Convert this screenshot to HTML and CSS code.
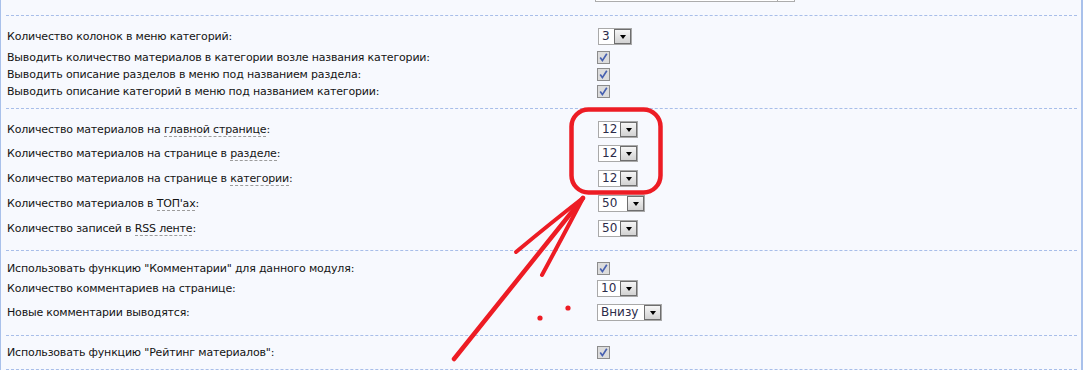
FILE: index.html
```html
<!DOCTYPE html>
<html lang="ru">
<head>
<meta charset="utf-8">
<title>Настройки модуля</title>
<link rel="stylesheet" href="styles.css">
</head>
<body>
<div class="panel">
  <div class="top"><div class="topsel"><span class="topsel-btn"></span></div></div>

  <section class="sec s1">
    <div class="row ra"><div class="lbl">Количество колонок в меню категорий:</div><div class="ctl"><div class="sel w34"><span class="val">3</span><span class="btn"></span></div></div></div>
    <div class="row rc"><div class="lbl">Выводить количество материалов в категории возле названия категории:</div><div class="ctl"><svg class="cb" width="13" height="13" viewBox="0 0 13 13"><rect x="0.5" y="0.5" width="12" height="12" fill="#dcdcdc" stroke="#8c8c8c"/><path d="M3.2 6.6 L5.4 9.6 L9.8 2.8" fill="none" stroke="#4760b0" stroke-width="1.7"/></svg></div></div>
    <div class="row rc"><div class="lbl">Выводить описание разделов в меню под названием раздела:</div><div class="ctl"><svg class="cb" width="13" height="13" viewBox="0 0 13 13"><rect x="0.5" y="0.5" width="12" height="12" fill="#dcdcdc" stroke="#8c8c8c"/><path d="M3.2 6.6 L5.4 9.6 L9.8 2.8" fill="none" stroke="#4760b0" stroke-width="1.7"/></svg></div></div>
    <div class="row rc"><div class="lbl">Выводить описание категорий в меню под названием категории:</div><div class="ctl"><svg class="cb" width="13" height="13" viewBox="0 0 13 13"><rect x="0.5" y="0.5" width="12" height="12" fill="#dcdcdc" stroke="#8c8c8c"/><path d="M3.2 6.6 L5.4 9.6 L9.8 2.8" fill="none" stroke="#4760b0" stroke-width="1.7"/></svg></div></div>
  </section>

  <section class="sec s2">
    <div class="row r24"><div class="lbl">Количество материалов на <span class="hint">главной странице</span>:</div><div class="ctl"><div class="sel w40"><span class="val">12</span><span class="btn"></span></div></div></div>
    <div class="row r25"><div class="lbl">Количество материалов на странице в <span class="hint">разделе</span>:</div><div class="ctl"><div class="sel w40"><span class="val">12</span><span class="btn"></span></div></div></div>
    <div class="row r25"><div class="lbl">Количество материалов на странице в <span class="hint">категории</span>:</div><div class="ctl"><div class="sel w40"><span class="val">12</span><span class="btn"></span></div></div></div>
    <div class="row r25"><div class="lbl">Количество материалов в <span class="hint">ТОП'ах</span>:</div><div class="ctl"><div class="sel w47"><span class="val">50</span><span class="btn"></span></div></div></div>
    <div class="row r25"><div class="lbl">Количество записей в <span class="hint">RSS ленте</span>:</div><div class="ctl"><div class="sel w40"><span class="val">50</span><span class="btn"></span></div></div></div>
  </section>

  <section class="sec s3">
    <div class="row r18"><div class="lbl">Использовать функцию "Комментарии" для данного модуля:</div><div class="ctl"><svg class="cb" width="13" height="13" viewBox="0 0 13 13"><rect x="0.5" y="0.5" width="12" height="12" fill="#dcdcdc" stroke="#8c8c8c"/><path d="M3.2 6.6 L5.4 9.6 L9.8 2.8" fill="none" stroke="#4760b0" stroke-width="1.7"/></svg></div></div>
    <div class="row r23"><div class="lbl">Количество комментариев на странице:</div><div class="ctl"><div class="sel w41"><span class="val">10</span><span class="btn"></span></div></div></div>
    <div class="row r25"><div class="lbl">Новые комментарии выводятся:</div><div class="ctl"><div class="sel w65"><span class="val">Внизу</span><span class="btn"></span></div></div></div>
  </section>

  <section class="sec s4">
    <div class="row r20"><div class="lbl">Использовать функцию "Рейтинг материалов":</div><div class="ctl"><svg class="cb" width="13" height="13" viewBox="0 0 13 13"><rect x="0.5" y="0.5" width="12" height="12" fill="#dcdcdc" stroke="#8c8c8c"/><path d="M3.2 6.6 L5.4 9.6 L9.8 2.8" fill="none" stroke="#4760b0" stroke-width="1.7"/></svg></div></div>
  </section>

  <svg class="ink" width="1083" height="370" viewBox="0 0 1083 370">
    <g fill="none" stroke="#ed1c24" stroke-linecap="round" stroke-linejoin="round">
      <rect x="571.5" y="109.5" width="89" height="83" rx="17" stroke-width="4.5"/>
      <path d="M454 359 L583 198" stroke-width="4.5"/>
      <path d="M583 198 Q552 222 516 252" stroke-width="4"/>
      <path d="M583 198 Q562 238 542 275" stroke-width="4"/>
    </g>
    <circle cx="540" cy="318" r="2.6" fill="#ed1c24"/>
    <circle cx="568" cy="308" r="2.6" fill="#ed1c24"/>
  </svg>
</div>
</body>
</html>
```

FILE: styles.css
```css
html, body {
  margin: 0;
  padding: 0;
  background: #f7f9fe;
}

.panel {
  position: relative;
  width: 1080px;
  height: 370px;
  border-left: 1px solid #a9c1eb;
  border-right: 2px solid #a9c1eb;
  background: #f7f9fe;
  font-family: "DejaVu Sans", Verdana, sans-serif;
  font-size: 11px;
  color: #141414;
  overflow: hidden;
}

.top {
  height: 15px;
}

.topsel {
  position: relative;
  margin-left: 594px;
  width: 200px;
  height: 2px;
  box-sizing: border-box;
  border: 1px solid #acacac;
  border-top: none;
  background: #fff;
}

.topsel-btn {
  display: block;
  margin-left: 181px;
  width: 17px;
  height: 1px;
  border-left: 1px solid #acacac;
}

.sec {
  margin: 0 4px 0 5px;
  border-top: 1px dashed #a8bee9;
}

.s1 { padding: 9px 0 8px; }
.s2 { padding: 8px 0 9px; }
.s3 { padding: 8px 0 10px; }
.s4 { padding: 6px 0 7px; border-bottom: 1px dashed #a8bee9; }

.row {
  display: grid;
  grid-template-columns: 591px auto;
  align-items: center;
  padding-left: 1px;
}

.ra { height: 22px; margin-bottom: 2px; }
.rc { height: 17px; }
.r18 { height: 18px; }
.r20 { height: 20px; }
.r23 { height: 23px; }
.r24 { height: 24px; }
.r25 { height: 25px; }

.lbl {
  white-space: nowrap;
  letter-spacing: -0.18px;
}

.hint {
  border-bottom: 1px dashed #9c9c9c;
}

.ctl {
  display: flex;
  align-items: center;
}

.cb {
  display: block;
  margin-left: -1px;
}

.sel {
  display: flex;
  height: 17px;
  box-sizing: border-box;
  border: 1px solid #a9a9a9;
  background: #fff;
}

.w34 { width: 34px; }
.w40 { width: 40px; }
.w41 { width: 41px; margin-left: -1px; }
.w47 { width: 47px; }
.w65 { width: 65px; margin-left: -1px; }

.val {
  flex: 1;
  padding-left: 3px;
  font-size: 12px;
  line-height: 15px;
  color: #2c2c4a;
}

.btn {
  width: 17px;
  height: 15px;
  box-sizing: border-box;
  border: 1px solid #6e6e6e;
  background: linear-gradient(#f6f6f6, #d2d2d2);
  display: flex;
  align-items: center;
  justify-content: center;
}

.btn::after {
  content: "";
  border-left: 3.5px solid transparent;
  border-right: 3.5px solid transparent;
  border-top: 4px solid #000;
  margin-top: 1px;
}

.ink {
  position: absolute;
  left: -1px;
  top: 0;
  pointer-events: none;
}
```
